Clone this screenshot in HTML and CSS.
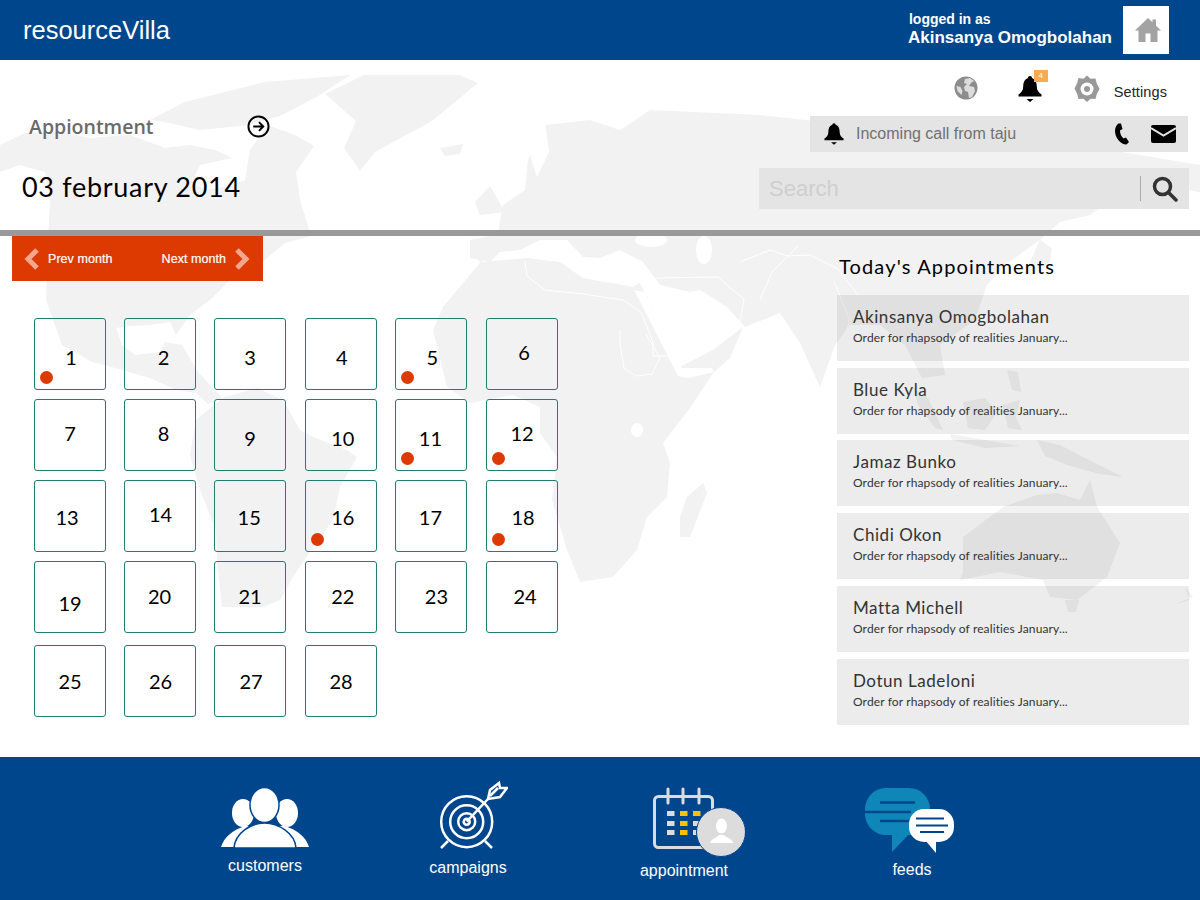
FILE: index.html
```html
<!DOCTYPE html>
<html lang="en">
<head>
<meta charset="utf-8">
<title>resourceVilla</title>
<link rel="stylesheet" href="styles.css">
</head>
<body>
<div class="page">
  <svg class="map" viewBox="0 0 1200 900" aria-hidden="true">
    <g class="land">
      <path d="M0 145L25 133 60 132 90 138 130 135 165 148 190 145 215 150 232 158 200 165 192 182 205 190 232 186 245 180 250 150 268 125 295 135 314 146 296 172 300 200 311 236 285 243 262 262 240 268 225 285 210 300 190 315 176 335 170 322 150 325 130 326 116 328 122 345 135 355 160 352 165 342 182 345 198 372 222 398 208 404 196 393 176 390 150 378 115 368 92 362 62 345 46 300 48 240 50 200 45 172 20 165 0 172Z"/>
      <path d="M150 120L185 102 265 82 350 75 320 95 282 115 250 125 200 130 165 122Z"/>
      <path d="M325 94L364 75 459 75 478 83 432 121 375 152 360 171 344 148 356 121Z"/>
      <path d="M440 148L463 144 460 154 445 156Z"/>
      <path d="M475 202L490 186 505 212 480 215Z"/>
      <path d="M222 398L257 388 283 400 300 430 313 437 347 450 357 457 340 487 333 520 313 547 293 577 280 600 263 607 222 607 217 563 216 530 200 490 190 455 196 420Z"/>
      <path d="M470 240L490 236 498 232 503 205 525 190 528 160 545 125 590 120 620 130 650 110 760 115 850 125 930 135 1000 130 1080 145 1200 165 1200 192 1130 180 1112 200 1090 215 1060 222 1040 240 1005 265 987 285 975 320 940 345 945 375 922 378 905 345 880 325 850 325 835 345 820 387 800 343 780 313 745 327 727 307 700 290 690 292 660 285 643 262 620 250 600 258 583 257 567 240 540 240 520 250 500 252 490 262 470 258Z"/>
      <path d="M470 240L483 262 527 258 560 262 583 278 633 287 640 283 680 367 713 350 743 327 730 358 713 373 690 408 663 443 670 463 667 497 647 517 637 550 613 577 580 582 567 550 552 500 557 457 540 433 540 407 513 395 470 403 447 387 433 330 443 307 463 283 480 263Z"/>
      <path d="M703 483L707 493 690 537 680 537 680 517 687 497Z"/>
      <path d="M963 537L963 573 960 580 1000 572 1043 580 1050 597 1077 600 1107 577 1120 543 1097 507 1090 480 1080 500 1057 493 1037 495 1003 507Z"/>
      <path d="M1173 605L1193 597 1185 587 1190 600Z"/>
      <path d="M1065 600h14l-3 12h-8Z"/>
      <path d="M1037 440L1060 445 1085 458 1123 477 1100 474 1070 466 1045 456Z"/>
      <path d="M963 402L985 398 997 412 985 430 968 428Z"/>
      <path d="M913 387L928 398 943 430 935 428 918 405Z"/>
      <path d="M950 434L985 440 1020 446 985 448 952 440Z"/>
      <path d="M1007 370L1018 372 1021 392 1012 390Z"/>
      <path d="M1003 405L1020 400 1016 418 1022 430 1008 428Z"/>
      <path d="M1040 240L1052 248 1050 262 1025 275 1030 262Z"/>
    </g>
    <g class="sea">
      <ellipse cx="704" cy="250" rx="8" ry="14"/>
      <ellipse cx="651" cy="240" rx="16" ry="7"/>
      <ellipse cx="637" cy="430" rx="6" ry="7"/>
      <path d="M698 290L712 300 722 312 706 316 695 300Z"/>
      <path d="M634 290L644 292 682 368 712 368 714 372 688 378 678 376Z"/>
      <path d="M985 178h70l-20 8h-45Z"/>
      <path d="M530 130l15-8 4 30-12 25-6-18Z"/>
    </g>
    <g class="border">
      <path d="M525 262l2 14 18 14 38 4 40 6 18 12 12 30v14l24 0 8-14-10-32"/>
      <path d="M620 330v14l4 24 12 8 16-2 8-16-14-24"/>
      <path d="M652 278l66-1 16 14 10 8-4 24"/>
      <path d="M740 262l30-12 18 6 22-1 28 14 20 26"/>
      <path d="M760 300l12-28 26-26"/>
      <path d="M840 345l10-24-16-40"/>
    </g>
  </svg>

  <header class="topbar">
    <div class="brand">resourceVilla</div>
    <div class="account">
      <div class="who">
        <div class="who-label">logged in as</div>
        <div class="who-name">Akinsanya Omogbolahan</div>
      </div>
      <div class="home">
        <svg class="home-icon" viewBox="0 0 26 26"><path d="M13 1L0 13.500h3.500V25h7v-8.500h5V25h7V13.500H26L21 8.700V2.500h-3.500v2.800Z"/></svg>
      </div>
    </div>
  </header>

  <section class="subhead">
    <div class="subhead-left">
      <div class="section-row">
        <span class="section-name">Appiontment</span>
        <svg class="go-icon" viewBox="0 0 24 24"><circle cx="12" cy="12" r="10.500"/><path d="M6.500 12h10M12.500 7.500l4.500 4.500-4.500 4.500"/></svg>
      </div>
      <div class="today">03 february 2014</div>
    </div>
    <div class="subhead-right">
      <div class="tools">
        <svg class="globe" viewBox="0 0 24 24"><circle class="globe-ball" cx="12" cy="12" r="11.500"/><path class="globe-land" d="M11 3l5-1 4 3-3 2-2 3 5 1 1 4-3 6-3 1-1-6-3-1-1-4 3-3-3-1ZM2.500 10l4 1 2 4-1 4-4-4Z"/></svg>
        <div class="bell-wrap">
          <svg class="bell" viewBox="0 0 24 28"><path d="M12 1c1.300 0 2 .9 2 2 3.300 1.200 4.800 4.300 4.800 8.500 0 4 2 6.300 4.700 8v2H.5v-2c2.700-1.700 4.700-4 4.700-8C5.200 7.300 6.700 4.200 10 3c0-1.100.7-2 2-2ZM8.500 24h7L12 27Z"/></svg>
          <span class="badge">4</span>
        </div>
        <svg class="gear" viewBox="0 0 26 28"><path class="gear-body" d="M13 .5l3.500 3.200 5-.2 1.300 5 2.700 5.500-2.700 5-1.300 5-5-.2-3.500 3.200-3.500-3.200-5 .2-1.300-5L.5 13.500l2.700-5.500 1.300-5 5 .7Z"/><circle class="gear-hole" cx="13" cy="14" r="6.500"/><circle class="gear-body" cx="13" cy="14" r="3"/></svg>
        <span class="settings">Settings</span>
      </div>
      <div class="notice">
        <svg class="notice-bell" viewBox="0 0 24 28"><path d="M12 1c1.300 0 2 .9 2 2 3.300 1.200 4.800 4.300 4.800 8.500 0 4 2 6.300 4.700 8v2H.5v-2c2.700-1.700 4.700-4 4.700-8C5.200 7.300 6.700 4.200 10 3c0-1.100.7-2 2-2ZM8.500 24h7L12 27Z"/></svg>
        <span class="notice-text">Incoming call from taju</span>
        <svg class="phone" viewBox="0 0 16 22"><path d="M4.500.5l2.500 0 1.500 5.500-2.500 1.500c0 3 1.200 6 3.500 8l2.500-1 3 4.500-2.500 2.500C6 21.500 1 14 1 8c0-3.500 1.500-6.200 3.500-7.500Z"/></svg>
        <svg class="mail" viewBox="0 0 25 18"><rect width="25" height="18" rx="2"/><path d="M0 3l12.500 7.500L25 3"/></svg>
      </div>
      <div class="search">
        <span class="search-text">Search</span>
        <span class="search-rule"></span>
        <svg class="search-icon" viewBox="0 0 26 26"><circle cx="10.500" cy="10.500" r="8"/><path d="M16.500 16.500l7.500 7.500"/></svg>
      </div>
    </div>
  </section>

  <main class="content">
    <div class="calendar-col">
      <nav class="month-nav">
        <div class="month-link">
          <svg class="chev" viewBox="0 0 16 22"><path d="M13 2L4 11l9 9"/></svg>
          <span>Prev month</span>
        </div>
        <div class="month-link">
          <span>Next month</span>
          <svg class="chev" viewBox="0 0 16 22"><path d="M3 2l9 9-9 9"/></svg>
        </div>
      </nav>
      <div class="calendar">
        <div class="day has-event"><span>1</span></div>
        <div class="day"><span>2</span></div>
        <div class="day"><span>3</span></div>
        <div class="day"><span>4</span></div>
        <div class="day has-event"><span>5</span></div>
        <div class="day"><span>6</span></div>
        <div class="day"><span>7</span></div>
        <div class="day"><span>8</span></div>
        <div class="day"><span>9</span></div>
        <div class="day"><span>10</span></div>
        <div class="day has-event"><span>11</span></div>
        <div class="day has-event"><span>12</span></div>
        <div class="day"><span>13</span></div>
        <div class="day"><span>14</span></div>
        <div class="day"><span>15</span></div>
        <div class="day has-event"><span>16</span></div>
        <div class="day"><span>17</span></div>
        <div class="day has-event"><span>18</span></div>
        <div class="day"><span>19</span></div>
        <div class="day"><span>20</span></div>
        <div class="day"><span>21</span></div>
        <div class="day"><span>22</span></div>
        <div class="day"><span>23</span></div>
        <div class="day"><span>24</span></div>
        <div class="day"><span>25</span></div>
        <div class="day"><span>26</span></div>
        <div class="day"><span>27</span></div>
        <div class="day"><span>28</span></div>
      </div>
    </div>
    <aside class="appointments">
      <h2 class="appointments-title">Today's Appointments</h2>
      <div class="appt"><div class="appt-name">Akinsanya Omogbolahan</div><div class="appt-sub">Order for rhapsody of realities January...</div></div>
      <div class="appt"><div class="appt-name">Blue Kyla</div><div class="appt-sub">Order for rhapsody of realities January...</div></div>
      <div class="appt"><div class="appt-name">Jamaz Bunko</div><div class="appt-sub">Order for rhapsody of realities January...</div></div>
      <div class="appt"><div class="appt-name">Chidi Okon</div><div class="appt-sub">Order for rhapsody of realities January...</div></div>
      <div class="appt"><div class="appt-name">Matta Michell</div><div class="appt-sub">Order for rhapsody of realities January...</div></div>
      <div class="appt"><div class="appt-name">Dotun Ladeloni</div><div class="appt-sub">Order for rhapsody of realities January...</div></div>
    </aside>
  </main>

  <footer class="dock">
    <div class="dock-item customers">
      <svg viewBox="0 0 88 72" class="dock-icon">
        <ellipse class="w" cx="22" cy="33" rx="11" ry="14"/>
        <ellipse class="w" cx="66" cy="33" rx="11" ry="14"/>
        <path class="w" d="M0 67C3 57 12 50 24 46L64 46C76 50 85 57 88 67Z"/>
        <ellipse class="w edged" cx="43.500" cy="25" rx="14.500" ry="17.500"/>
        <path class="w edged" d="M13 68C14 53 30 43 43.500 43S74 53 75 68Z"/>
      </svg>
      <span class="dock-label">customers</span>
    </div>
    <div class="dock-item campaigns">
      <svg viewBox="0 0 80 72" class="dock-icon target">
        <circle cx="38.700" cy="41.700" r="25.500"/>
        <circle cx="38.700" cy="41.700" r="16.500"/>
        <circle cx="38.700" cy="41.700" r="8.500"/>
        <circle cx="38.700" cy="41.700" r="3"/>
        <path d="M38.700 41.700L60 19M20 61l-7 7M57 61l7 7"/>
        <path d="M60 19l2-9 9-7 1 5 7 0-7 9-6 1ZM62 16l8-8"/>
      </svg>
      <span class="dock-label">campaigns</span>
    </div>
    <div class="dock-item appointment">
      <svg viewBox="0 0 122 78" class="dock-icon appt-icon">
        <rect class="cal" x="31.500" y="16.500" width="58" height="51" rx="4"/>
        <path class="cal" d="M45 9v14M60 9v14M76 9v14"/>
        <rect class="gy" x="44" y="31" width="7.500" height="5"/>
        <rect class="yl" x="57" y="31" width="7.500" height="5"/>
        <rect class="yl" x="70" y="31" width="7.500" height="5"/>
        <rect class="gy" x="44" y="41" width="7.500" height="5"/>
        <rect class="yl" x="57" y="41" width="7.500" height="5"/>
        <rect class="gy" x="70" y="41" width="7.500" height="5"/>
        <rect class="gy" x="44" y="50" width="7.500" height="5"/>
        <rect class="yl" x="57" y="50" width="7.500" height="5"/>
        <rect class="gy" x="70" y="50" width="7.500" height="5"/>
        <circle class="avatar" cx="98" cy="52" r="24.500"/>
        <ellipse class="w" cx="98.500" cy="46" rx="5.500" ry="7.500"/>
        <path class="w" d="M87 63c2-5 7-5 9-8h5c2 3 8 3 9 8Z"/>
      </svg>
      <span class="dock-label">appointment</span>
    </div>
    <div class="dock-item feeds">
      <svg viewBox="0 0 94 78" class="dock-icon">
        <rect class="bub" x="0" y="8" width="65" height="47" rx="21"/>
        <path class="bub" d="M27 50v22l19-20Z"/>
        <path class="ln" d="M15 22.500h35M0 32h46M15 41h30"/>
        <rect class="w" x="44" y="29" width="45" height="33" rx="15"/>
        <path class="w" d="M60 60l11 13V60Z"/>
        <path class="ln thin" d="M51 38.500h28M51 45.500h32M55 52h24"/>
      </svg>
      <span class="dock-label">feeds</span>
    </div>
  </footer>
</div>
</body>
</html>
```

FILE: styles.css
```css
* { box-sizing: border-box; }
html, body { margin: 0; padding: 0; }
body { background: #fff; font-family: "Liberation Sans", Arial, sans-serif; }
.page { position: relative; width: 1200px; height: 900px; overflow: hidden; display: flex; flex-direction: column; }

.map { position: absolute; left: 0; top: 0; width: 1200px; height: 900px; z-index: 0; filter: blur(.5px); }
.land path { fill: #f2f2f2; }
.sea > * { fill: #fff; }
.border path { fill: none; stroke: #fff; stroke-width: 1; }

.topbar, .subhead, .content, .dock { position: relative; z-index: 1; }

.topbar { height: 60px; flex: none; background: #00468c; color: #fff; display: flex; align-items: center; justify-content: space-between; padding: 0 31px 0 23px; }
.brand { font-size: 25.500px; }
.account { display: flex; align-items: center; gap: 11px; }
.who { font-weight: bold; }
.who-label { font-size: 14px; line-height: 16px; margin-left: 1px; }
.who-name { font-size: 17px; line-height: 22px; }
.home { width: 46px; height: 48px; background: #fff; display: flex; align-items: center; justify-content: center; padding-left: 4px; }
.home-icon { width: 26px; height: 26px; fill: #a3a3a3; }

.subhead { height: 176px; flex: none; border-bottom: 6px solid #999; display: flex; justify-content: space-between; }
.subhead-left { padding: 53px 0 0 22px; }
.section-row { display: flex; align-items: center; height: 26px; padding-left: 7px; }
.section-name { width: 218px; font-family: "Open Sans", sans-serif; font-size: 19.500px; font-weight: 600; color: #6a6a6a; }
.go-icon { width: 23px; height: 23px; fill: none; stroke: #000; stroke-width: 2; }
.today { font-family: Lato, sans-serif; font-size: 27px; letter-spacing: .7px; color: #000; margin-top: 31px; line-height: 34px; }

.subhead-right { display: flex; flex-direction: column; align-items: flex-end; padding: 12px 11px 0 0; }
.tools { display: flex; align-items: center; height: 34px; padding-right: 22px; }
.globe { width: 24px; height: 24px; margin-top: -3px; }
.globe-ball { fill: #8c8c8c; }
.globe-land { fill: #dcdcdc; }
.bell-wrap { position: relative; margin-left: 40px; width: 24px; height: 28px; }
.bell { width: 24px; height: 28px; fill: #000; display: block; }
.badge { position: absolute; left: 16px; top: -5px; width: 14px; height: 12px; background: #f9ab52; color: #fff; font-size: 8px; line-height: 12px; text-align: center; }
.gear { width: 26px; height: 28px; margin-left: 32px; }
.gear-body { fill: #999; }
.gear-hole { fill: #fff; }
.settings { font-size: 14.500px; letter-spacing: .1px; color: #222; margin-left: 14px; margin-top: 6px; }

.notice { width: 378px; height: 36px; margin: 10px 1px 0 0; background: #e4e4e4; display: flex; align-items: center; padding: 0 12px 0 14px; }
.notice-bell { width: 20px; height: 24px; fill: #000; }
.notice-text { font-size: 16px; color: #707070; margin-left: 12px; flex: 1; }
.phone { width: 16px; height: 22px; fill: #000; }
.mail { width: 25px; height: 18px; margin-left: 21px; fill: #000; }
.mail path { fill: none; stroke: #e4e4e4; stroke-width: 2; }

.search { width: 430px; height: 41px; margin-top: 16px; background: #e4e4e4; display: flex; align-items: center; padding: 0 11px 0 10px; }
.search-text { flex: 1; font-size: 22px; color: #cfcfcf; }
.search-rule { width: 1px; height: 25px; background: #aaa; margin-right: 11px; }
.search-icon { width: 26px; height: 26px; fill: none; stroke: #333; stroke-width: 3.500; stroke-linecap: round; }

.content { flex: 1; display: flex; justify-content: space-between; padding: 0 11px 0 12px; }
.month-nav { width: 251px; height: 45px; background: #dc3a00; display: flex; align-items: center; justify-content: space-between; padding: 0 13px 0 12px; color: #fff; font-size: 12.500px; }
.month-link { display: flex; align-items: center; gap: 8px; letter-spacing: .05px; -webkit-text-stroke: .2px #fff; }
.chev { width: 16px; height: 22px; fill: none; stroke: #f3a78f; stroke-width: 5; }

.calendar { display: grid; grid-template-columns: 90px 90px 91px 90px 91px 72px; grid-auto-rows: 72px; row-gap: 9px; margin: 37px 0 0 22px; }
.day { position: relative; width: 72px; height: 72px; display: flex; align-items: center; justify-content: center; border: 1px solid #1f7d72; border-radius: 3px; font-family: Lato, sans-serif; font-size: 20px; color: #000; }
.day span { margin-left: calc(2 * var(--dx, 0px)); margin-top: calc(2 * var(--dy, 0px)); }
.has-event::after { content: ""; position: absolute; left: 5px; top: 52px; width: 13px; height: 13px; border-radius: 50%; background: #dc3a00; }
.day:nth-child(n+25) { margin-top: 3px; }
.day:nth-child(1) { --dx: 1px; --dy: 3px; }
.day:nth-child(2) { --dx: 3.600px; --dy: 3px; }
.day:nth-child(3) { --dy: 3px; }
.day:nth-child(4) { --dx: .8px; --dy: 3px; }
.day:nth-child(5) { --dx: 1.400px; --dy: 3px; }
.day:nth-child(6) { --dx: 2px; --dy: -2px; }
.day:nth-child(7) { --dy: -2px; }
.day:nth-child(8) { --dx: 3.600px; --dy: -2px; }
.day:nth-child(9) { --dy: 3px; }
.day:nth-child(10) { --dx: 1.800px; --dy: 3px; }
.day:nth-child(11) { --dx: -.6px; --dy: 3px; }
.day:nth-child(12) { --dy: -2px; }
.day:nth-child(13) { --dx: -3px; --dy: 1px; }
.day:nth-child(14) { --dx: .6px; --dy: -2px; }
.day:nth-child(15) { --dx: -.8px; --dy: 1px; }
.day:nth-child(16) { --dx: 1.800px; --dy: 1px; }
.day:nth-child(17) { --dx: -.6px; --dy: 1px; }
.day:nth-child(18) { --dx: 1px; --dy: 1px; }
.day:nth-child(19) { --dy: 6px; }
.day:nth-child(20) { --dx: -.4px; --dy: -1px; }
.day:nth-child(21) { --dy: -1px; }
.day:nth-child(22) { --dx: 1.800px; --dy: -1px; }
.day:nth-child(23) { --dx: 5.400px; --dy: -1px; }
.day:nth-child(24) { --dx: 3px; --dy: -1px; }
.day:nth-child(26) { --dx: .6px; }
.day:nth-child(27) { --dx: 1px; }

.appointments { width: 352px; display: flex; flex-direction: column; gap: 6.800px; }
.appointments-title { margin: 18px 0 10px 2px; font-family: Lato, sans-serif; font-weight: 400; font-size: 20px; line-height: 24px; letter-spacing: 1.150px; color: #000; }
.appt { height: 66px; background: rgba(0, 0, 0, .075); padding: 11px 0 0 16px; }
.appt-name { font-family: Lato, sans-serif; font-size: 17px; line-height: 21px; letter-spacing: .55px; color: #333; }
.appt-sub { font-family: Lato, sans-serif; font-size: 12px; line-height: 14px; margin-top: 4px; letter-spacing: .13px; color: #333; }

.dock { height: 143px; flex: none; background: #00468c; display: flex; align-items: flex-start; padding: 23px 0 0 221px; }
.dock-item { display: flex; flex-direction: column; align-items: center; color: #fff; }
.dock-icon { display: block; height: 72px; }
.dock-label { font-size: 16px; line-height: 18px; }
.w { fill: #fff; }
.edged { stroke: #00468c; stroke-width: 1.500; }

.customers { width: 88px; }
.customers .dock-icon { width: 88px; }
.customers .dock-label { margin-top: 5px; }
.campaigns { width: 80px; margin-left: 119px; }
.campaigns .dock-icon { width: 80px; }
.campaigns .dock-label { margin-top: 7px; }
.target { fill: none; stroke: #fff; stroke-width: 2.500; }
.appointment { width: 122px; margin-left: 115px; }
.appointment .dock-icon { width: 122px; height: 78px; }
.appointment .dock-label { margin-top: 4px; }
.feeds { width: 94px; margin-left: 120px; }
.feeds .dock-icon { width: 94px; height: 78px; }
.feeds .dock-label { margin-top: 3px; }
.cal { fill: none; stroke: #dcdcdc; stroke-width: 3; stroke-linecap: round; }
.gy { fill: #dcdcdc; }
.yl { fill: #fcc200; }
.avatar { fill: #dcdcdc; stroke: #00468c; stroke-width: 1; }
.bub { fill: #0f86b8; }
.ln { fill: none; stroke: #00468c; stroke-width: 2.500; }
.thin { stroke-width: 2; }
```
